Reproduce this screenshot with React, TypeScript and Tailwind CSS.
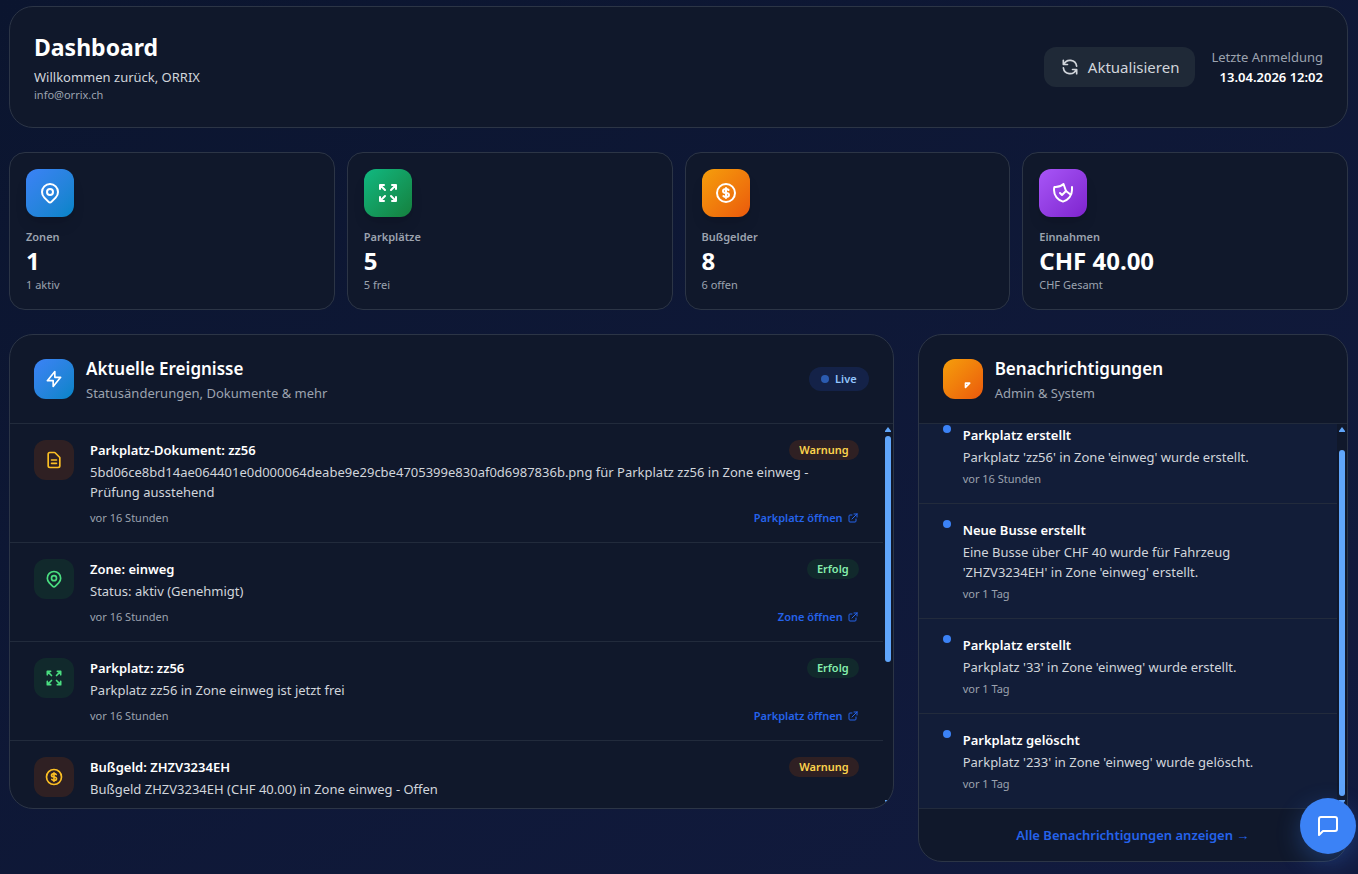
import type { ReactNode } from "react";

const icons = {
  pin: [
    "M17.657 16.657L13.414 20.9a1.998 1.998 0 01-2.827 0l-4.244-4.243a8 8 0 1111.314 0z",
    "M15 11a3 3 0 11-6 0 3 3 0 016 0z",
  ],
  expand: ["M4 8V4m0 0h4M4 4l5 5m11-1V4m0 0h-4m4 0l-5 5M4 16v4m0 0h4m-4 0l5-5m11 5l-5-5m5 5v-4m0 4h-4"],
  money: [
    "M12 8c-1.657 0-3 .895-3 2s1.343 2 3 2 3 .895 3 2-1.343 2-3 2m0-8c1.11 0 2.08.402 2.599 1M12 8V7m0 1v8m0 0v1m0-1c-1.11 0-2.08-.402-2.599-1M21 12a9 9 0 11-18 0 9 9 0 0118 0z",
  ],
  shield: [
    "M9 12l2 2 4-4",
    "M19.5 13.5L15 10l-2.5-7A12 12 0 013.4 6 12 12 0 003 9c0 5.6 3.8 10.3 9 11.6 5.2-1.3 9-6 9-11.6V6",
  ],
  bolt: ["M13 10V3L4 14h7v7l9-11h-7z"],
  bell: ["M15 17h5l-5 5v-5z"],
  document: [
    "M9 12h6m-6 4h6m2 5H7a2 2 0 01-2-2V5a2 2 0 012-2h5.586a1 1 0 01.707.293l5.414 5.414a1 1 0 01.293.707V19a2 2 0 01-2 2z",
  ],
  refresh: [
    "M4 4v5h.582m15.356 2A8.001 8.001 0 004.582 9m0 0H9m11 11v-5h-.581m0 0a8.003 8.003 0 01-15.357-2m15.357 2H15",
  ],
  external: ["M10 6H6a2 2 0 00-2 2v10a2 2 0 002 2h10a2 2 0 002-2v-4M14 4h6m0 0v6m0-6L10 14"],
  chat: ["M21 15a2 2 0 01-2 2H7l-4 4V5a2 2 0 012-2h14a2 2 0 012 2z"],
};

type IconName = keyof typeof icons;

const Icon = ({ name, className }: { name: IconName; className: string }) => (
  <svg
    className={className}
    viewBox="0 0 24 24"
    fill="none"
    stroke="currentColor"
    strokeWidth={2}
    strokeLinecap="round"
    strokeLinejoin="round"
    aria-hidden="true"
  >
    {icons[name].map((d) => (
      <path key={d} d={d} />
    ))}
  </svg>
);

const stats: { icon: IconName; color: string; label: string; value: string; note: string }[] = [
  { icon: "pin", color: "from-[#3b82f6] to-[#0284c7]", label: "Zonen", value: "1", note: "1 aktiv" },
  { icon: "expand", color: "from-[#10b981] to-[#15803d]", label: "Parkplätze", value: "5", note: "5 frei" },
  { icon: "money", color: "from-[#f59e0b] to-[#ea580c]", label: "Bußgelder", value: "8", note: "6 offen" },
  { icon: "shield", color: "from-[#a855f7] to-[#7e22ce]", label: "Einnahmen", value: "CHF 40.00", note: "CHF Gesamt" },
];

type Level = "Warnung" | "Erfolg";

const events: { icon: IconName; title: string; text: string; level: Level; time?: string; link?: string }[] = [
  {
    icon: "document",
    title: "Parkplatz-Dokument: zz56",
    text: "5bd06ce8bd14ae064401e0d000064deabe9e29cbe4705399e830af0d6987836b.png für Parkplatz zz56 in Zone einweg - Prüfung ausstehend",
    level: "Warnung",
    time: "vor 16 Stunden",
    link: "Parkplatz öffnen",
  },
  {
    icon: "pin",
    title: "Zone: einweg",
    text: "Status: aktiv (Genehmigt)",
    level: "Erfolg",
    time: "vor 16 Stunden",
    link: "Zone öffnen",
  },
  {
    icon: "expand",
    title: "Parkplatz: zz56",
    text: "Parkplatz zz56 in Zone einweg ist jetzt frei",
    level: "Erfolg",
    time: "vor 16 Stunden",
    link: "Parkplatz öffnen",
  },
  {
    icon: "money",
    title: "Bußgeld: ZHZV3234EH",
    text: "Bußgeld ZHZV3234EH (CHF 40.00) in Zone einweg - Offen",
    level: "Warnung",
  },
];

const notifications = [
  { title: "Parkplatz erstellt", text: "Parkplatz 'zz56' in Zone 'einweg' wurde erstellt.", time: "vor 16 Stunden" },
  {
    title: "Neue Busse erstellt",
    text: "Eine Busse über CHF 40 wurde für Fahrzeug 'ZHZV3234EH' in Zone 'einweg' erstellt.",
    time: "vor 1 Tag",
  },
  { title: "Parkplatz erstellt", text: "Parkplatz '33' in Zone 'einweg' wurde erstellt.", time: "vor 1 Tag" },
  { title: "Parkplatz gelöscht", text: "Parkplatz '233' in Zone 'einweg' wurde gelöscht.", time: "vor 1 Tag" },
];

const levelStyles: Record<Level, { box: string; badge: string }> = {
  Warnung: { box: "bg-[#78350f]/30 text-[#fbbf24]", badge: "bg-[#78350f]/30 text-[#fcd34d]" },
  Erfolg: { box: "bg-[#14532d]/30 text-[#4ade80]", badge: "bg-[#14532d]/30 text-[#86efac]" },
};

const Scrollbar = ({ thumb }: { thumb: string }) => (
  <div className="flex w-[10px] shrink-0 flex-col items-center py-[3px]" aria-hidden="true">
    <svg className="h-[5px] w-1.5" viewBox="0 0 6 5" fill="#60a5fa">
      <path d="M3 0l3 4v1H0V4z" />
    </svg>
    <div className={`w-1.5 rounded-full bg-[#60a5fa] ${thumb}`} />
    <svg className="mt-auto h-[5px] w-1.5" viewBox="0 0 6 5" fill="#60a5fa">
      <path d="M3 5l3-4V0H0v1z" />
    </svg>
  </div>
);

const PanelHeader = ({
  icon,
  color,
  title,
  subtitle,
  children,
}: {
  icon: IconName;
  color: string;
  title: string;
  subtitle: string;
  children?: ReactNode;
}) => (
  <div className="flex items-center justify-between border-b border-[#222b3c] px-6 py-5">
    <div className="flex items-center gap-3">
      <div className={`flex h-10 w-10 items-center justify-center rounded-xl bg-linear-to-br text-white ${color}`}>
        <Icon name={icon} className="h-5 w-5" />
      </div>
      <div>
        <h2 className="text-[17px] leading-7 font-semibold text-white">{title}</h2>
        <p className="text-[13px] leading-5 text-[#9ca3af]">{subtitle}</p>
      </div>
    </div>
    {children}
  </div>
);

const App = () => (
  <div className="min-h-screen bg-linear-to-br from-[#0b152f] to-[#121b3f] pt-1.5 pr-[10px] pb-3 pl-[9px] font-['Noto_Sans',sans-serif] text-[13px] leading-5 text-[#d1d5db]">
    {/* Header */}
    <header className="flex items-center justify-between rounded-3xl border border-[#2c3546] bg-[#10182b] p-6">
      <div>
        <h1 className="mb-1 text-[23px] leading-8 font-bold text-white">Dashboard</h1>
        <p>Willkommen zurück, ORRIX</p>
        <p className="text-[11px] leading-4 text-[#9ca3af]">info@orrix.ch</p>
      </div>
      <div className="flex items-center gap-4">
        <button className="flex h-10 items-center gap-2 rounded-xl bg-[#1f2937] px-4 text-[15px]">
          <Icon name="refresh" className="h-5 w-5" />
          Aktualisieren
        </button>
        <div className="text-right">
          <p className="text-[#9ca3af]">Letzte Anmeldung</p>
          <p className="font-semibold text-white">13.04.2026 12:02</p>
        </div>
      </div>
    </header>

    {/* Stats */}
    <div className="mt-6 grid grid-cols-2 gap-3 lg:grid-cols-4">
      {stats.map((stat) => (
        <div key={stat.label} className="rounded-2xl border border-[#2c3546] bg-[#10182b] p-4">
          <div
            className={`mb-3 flex h-12 w-12 items-center justify-center rounded-xl bg-linear-to-br text-white shadow-lg ${stat.color}`}
          >
            <Icon name={stat.icon} className="h-6 w-6" />
          </div>
          <p className="text-[11px] leading-4 font-semibold text-[#9ca3af]">{stat.label}</p>
          <p className="text-2xl leading-8 font-bold text-white">{stat.value}</p>
          <p className="text-[11px] leading-4 text-[#9ca3af]">{stat.note}</p>
        </div>
      ))}
    </div>

    <div className="mt-6 grid grid-cols-1 items-start gap-6 lg:grid-cols-3">
      {/* Events */}
      <section className="overflow-hidden rounded-3xl border border-[#2c3546] bg-[#10182b] lg:col-span-2">
        <PanelHeader
          icon="bolt"
          color="from-[#3b82f6] to-[#0284c7]"
          title="Aktuelle Ereignisse"
          subtitle="Statusänderungen, Dokumente & mehr"
        >
          <span className="flex items-center gap-1.5 rounded-full bg-[#1e3a8a]/30 px-3 py-1 text-[11px] leading-4 font-semibold text-[#93c5fd]">
            <span className="h-2 w-2 rounded-full bg-[#3b82f6]/60" />
            Live
          </span>
        </PanelHeader>
        <div className="flex h-96 overflow-hidden">
          <ul className="min-w-0 flex-1 divide-y divide-[#222b3c]">
            {events.map((event) => (
              <li key={event.title} className="flex gap-4 px-6 py-4">
                <div
                  className={`flex h-10 w-10 shrink-0 items-center justify-center rounded-xl ${levelStyles[event.level].box}`}
                >
                  <Icon name={event.icon} className="h-5 w-5" />
                </div>
                <div className="min-w-0 flex-1">
                  <div className="flex items-center justify-between">
                    <h3 className="font-semibold text-white">{event.title}</h3>
                    <span
                      className={`rounded-full px-2.5 py-0.5 text-[11px] leading-4 font-semibold ${levelStyles[event.level].badge}`}
                    >
                      {event.level}
                    </span>
                  </div>
                  <p className="mt-0.5 pr-4">{event.text}</p>
                  {event.link && (
                    <div className="mt-2 flex items-center justify-between text-[11px] leading-4">
                      <span className="text-[#9ca3af]">{event.time}</span>
                      <a href="#" className="flex items-center gap-1 font-semibold text-[#2563eb]">
                        {event.link}
                        <Icon name="external" className="h-3 w-3" />
                      </a>
                    </div>
                  )}
                </div>
              </li>
            ))}
          </ul>
          <Scrollbar thumb="mt-1 h-[226px]" />
        </div>
      </section>

      {/* Notifications */}
      <section className="overflow-hidden rounded-3xl border border-[#2c3546] bg-[#10182b]">
        <PanelHeader
          icon="bell"
          color="from-[#f59e0b] to-[#ea580c]"
          title="Benachrichtigungen"
          subtitle="Admin & System"
        />
        <div className="flex h-96 overflow-hidden">
          <ul className="-mt-[15px] min-w-0 flex-1 divide-y divide-[#222b3c] bg-[#121d38]">
            {notifications.map((item, idx) => (
              <li key={idx} className="flex gap-3 px-6 py-4">
                <span className="h-2 w-2 shrink-0 rounded-full bg-[#3b82f6]" />
                <div className="min-w-0 flex-1">
                  <h3 className="font-semibold text-white">{item.title}</h3>
                  <p className="mt-0.5">{item.text}</p>
                  <p className="mt-1 text-[11px] leading-4 text-[#9ca3af]">{item.time}</p>
                </div>
              </li>
            ))}
          </ul>
          <Scrollbar thumb="mt-[18px] h-[346px]" />
        </div>
        <div className="border-t border-[#222b3c] p-4 text-center">
          <a href="#" className="font-semibold text-[#2563eb]">
            Alle Benachrichtigungen anzeigen →
          </a>
        </div>
      </section>
    </div>

    <button
      aria-label="Chat öffnen"
      className="fixed right-0.5 bottom-5 flex h-14 w-14 items-center justify-center rounded-full bg-[#3b82f6] text-white shadow-[0_8px_24px_rgba(59,130,246,0.3)]"
    >
      <Icon name="chat" className="h-6 w-6" />
    </button>
  </div>
);

export default App;
